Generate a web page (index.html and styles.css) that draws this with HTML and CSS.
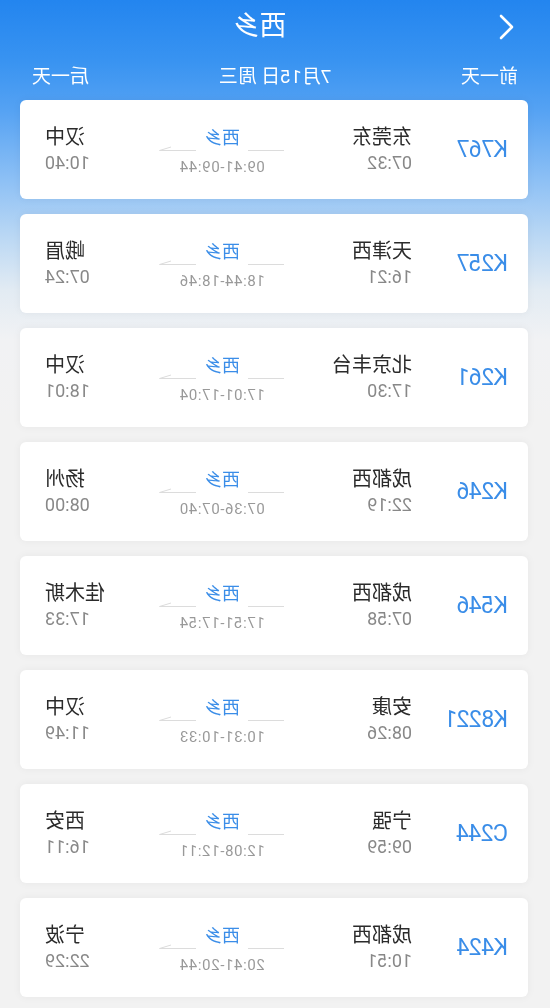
FILE: index.html
```html
<!DOCTYPE html>
<html lang="zh">
<head>
<meta charset="utf-8">
<title>西乡</title>
<link rel="stylesheet" href="styles.css">
</head>
<body>
<div class="screen">
  <header class="top">
    <div class="bar">
      <svg class="back" width="16" height="26" viewBox="0 0 16 26"><path d="M14 2 L3 13 L14 24" fill="none" stroke="#fff" stroke-width="2.6" stroke-linecap="round" stroke-linejoin="round"/></svg>
      <div class="title">西乡</div>
    </div>
    <div class="days">
      <span>前一天</span>
      <span>7月15日 周三</span>
      <span>后一天</span>
    </div>
  </header>
  <main class="list">
    <div class="card">
      <div class="num">K767</div>
      <div class="dep"><div class="st">东莞东</div><div class="tm">07:32</div></div>
      <div class="mid"><div class="route"><svg class="line" width="125" height="6" viewBox="0 0 125 6"><path d="M0 5.5 H124.5 M124.5 5.5 L113 2" fill="none" stroke="#dcdcdc" stroke-width="1"/></svg><span class="via">西乡</span></div><div class="range">09:41-09:44</div></div>
      <div class="arr"><div class="st">汉中</div><div class="tm">10:40</div></div>
    </div>
    <div class="card">
      <div class="num">K257</div>
      <div class="dep"><div class="st">天津西</div><div class="tm">16:21</div></div>
      <div class="mid"><div class="route"><svg class="line" width="125" height="6" viewBox="0 0 125 6"><path d="M0 5.5 H124.5 M124.5 5.5 L113 2" fill="none" stroke="#dcdcdc" stroke-width="1"/></svg><span class="via">西乡</span></div><div class="range">18:44-18:46</div></div>
      <div class="arr"><div class="st">峨眉</div><div class="tm">07:24</div></div>
    </div>
    <div class="card">
      <div class="num">K261</div>
      <div class="dep"><div class="st">北京丰台</div><div class="tm">17:30</div></div>
      <div class="mid"><div class="route"><svg class="line" width="125" height="6" viewBox="0 0 125 6"><path d="M0 5.5 H124.5 M124.5 5.5 L113 2" fill="none" stroke="#dcdcdc" stroke-width="1"/></svg><span class="via">西乡</span></div><div class="range">17:01-17:04</div></div>
      <div class="arr"><div class="st">汉中</div><div class="tm">18:01</div></div>
    </div>
    <div class="card">
      <div class="num">K246</div>
      <div class="dep"><div class="st">成都西</div><div class="tm">22:19</div></div>
      <div class="mid"><div class="route"><svg class="line" width="125" height="6" viewBox="0 0 125 6"><path d="M0 5.5 H124.5 M124.5 5.5 L113 2" fill="none" stroke="#dcdcdc" stroke-width="1"/></svg><span class="via">西乡</span></div><div class="range">07:36-07:40</div></div>
      <div class="arr"><div class="st">扬州</div><div class="tm">08:00</div></div>
    </div>
    <div class="card">
      <div class="num">K546</div>
      <div class="dep"><div class="st">成都西</div><div class="tm">07:58</div></div>
      <div class="mid"><div class="route"><svg class="line" width="125" height="6" viewBox="0 0 125 6"><path d="M0 5.5 H124.5 M124.5 5.5 L113 2" fill="none" stroke="#dcdcdc" stroke-width="1"/></svg><span class="via">西乡</span></div><div class="range">17:51-17:54</div></div>
      <div class="arr"><div class="st">佳木斯</div><div class="tm">17:33</div></div>
    </div>
    <div class="card">
      <div class="num">K8221</div>
      <div class="dep"><div class="st">安康</div><div class="tm">08:26</div></div>
      <div class="mid"><div class="route"><svg class="line" width="125" height="6" viewBox="0 0 125 6"><path d="M0 5.5 H124.5 M124.5 5.5 L113 2" fill="none" stroke="#dcdcdc" stroke-width="1"/></svg><span class="via">西乡</span></div><div class="range">10:31-10:33</div></div>
      <div class="arr"><div class="st">汉中</div><div class="tm">11:49</div></div>
    </div>
    <div class="card">
      <div class="num">C244</div>
      <div class="dep"><div class="st">宁强</div><div class="tm">09:59</div></div>
      <div class="mid"><div class="route"><svg class="line" width="125" height="6" viewBox="0 0 125 6"><path d="M0 5.5 H124.5 M124.5 5.5 L113 2" fill="none" stroke="#dcdcdc" stroke-width="1"/></svg><span class="via">西乡</span></div><div class="range">12:08-12:11</div></div>
      <div class="arr"><div class="st">西安</div><div class="tm">16:11</div></div>
    </div>
    <div class="card">
      <div class="num">K424</div>
      <div class="dep"><div class="st">成都西</div><div class="tm">10:51</div></div>
      <div class="mid"><div class="route"><svg class="line" width="125" height="6" viewBox="0 0 125 6"><path d="M0 5.5 H124.5 M124.5 5.5 L113 2" fill="none" stroke="#dcdcdc" stroke-width="1"/></svg><span class="via">西乡</span></div><div class="range">20:41-20:44</div></div>
      <div class="arr"><div class="st">宁波</div><div class="tm">22:29</div></div>
    </div>
  </main>
</div>
</body>
</html>
```
FILE: styles.css
```css
* { box-sizing: border-box; }
html, body { margin: 0; padding: 0; }
body {
  width: 550px;
  height: 1008px;
  overflow: hidden;
  background: #f2f2f2;
  font-family: Roboto, "Noto Sans CJK SC", sans-serif;
}
.screen {
  width: 550px;
  min-height: 1008px;
  transform: scaleX(-1);
  background: linear-gradient(to bottom, #2385ef 0px, #3893f1 60px, #55a2f3 110px, #8dc0f5 180px, #b9d7f4 235px, #e2ebf3 290px, #f1f2f4 340px, #f2f2f2 420px);
}
.top { color: #fff; }
.bar {
  height: 52px;
  display: flex;
  align-items: center;
  padding-left: 35px;
}
.back { display: block; margin-top: 2px; }
.title {
  flex: 1;
  text-align: center;
  font-size: 27px;
  line-height: 52px;
  padding-right: 20px;
}
.days {
  height: 44px;
  display: flex;
  justify-content: space-between;
  align-items: center;
  padding: 0 32px;
  font-size: 19px;
}
.list {
  display: flex;
  flex-direction: column;
  gap: 15px;
  padding: 4px 20px 0 22px;
}
.card {
  height: 99px;
  background: #fff;
  border-radius: 6px;
  box-shadow: 0 0 8px rgba(0, 0, 0, 0.05);
  display: flex;
  align-items: center;
  padding: 0 25px 0 20px;
}
.num {
  width: 96px;
  font-size: 23px;
  color: #3a8de8;
  letter-spacing: -0.6px;
}
.dep { width: 110px; }
.arr { width: 97px; text-align: right; }
.st {
  font-size: 20px;
  line-height: 26px;
  color: #2b2b2b;
  white-space: nowrap;
}
.tm {
  font-size: 18px;
  line-height: 26px;
  color: #888;
}
.mid {
  width: 160px;
  display: flex;
  flex-direction: column;
  align-items: center;
  padding-top: 4px;
}
.route {
  position: relative;
  width: 125px;
  height: 24px;
  display: flex;
  justify-content: center;
}
.line { position: absolute; left: 0; bottom: 0; }
.via {
  position: relative;
  background: #fff;
  padding: 0 8px;
  font-size: 18px;
  line-height: 22px;
  color: #3a8de8;
}
.range {
  font-size: 15px;
  line-height: 20px;
  margin-top: 6px;
  color: #999;
  letter-spacing: 0.6px;
}
```
